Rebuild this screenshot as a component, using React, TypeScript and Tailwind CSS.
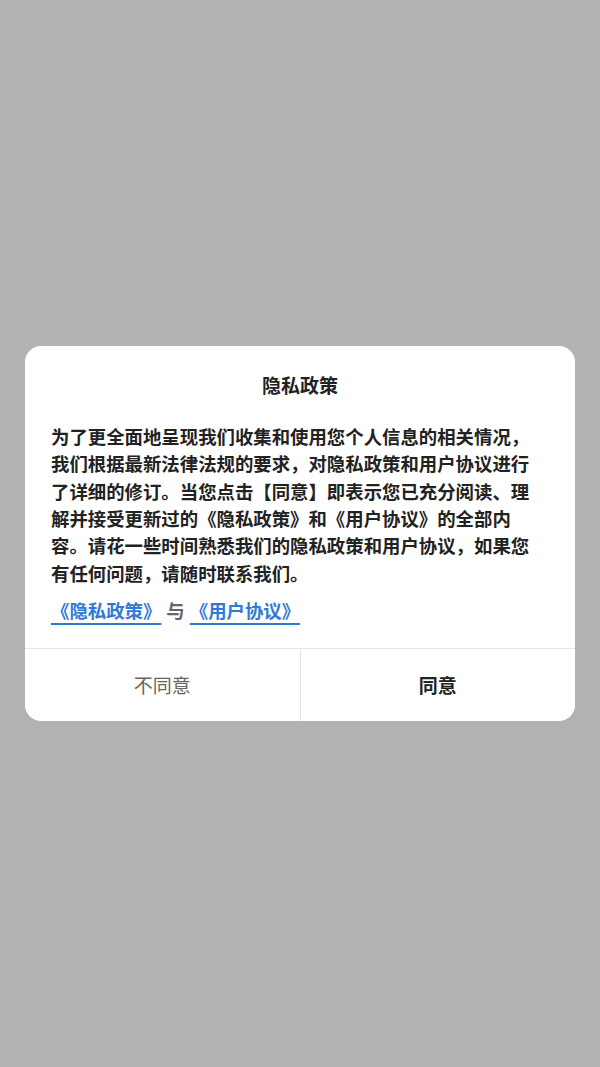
import React from "react";

export default function App() {
  return (
    <div
      className="w-[600px] h-[1067px] bg-[#b2b2b2] flex items-center justify-center"
      style={{ fontFamily: '"Noto Sans CJK SC", "Noto Sans", sans-serif' }}
    >
      <div className="w-[550px] bg-white rounded-[16px] overflow-hidden flex flex-col">
        <div className="pt-[25px] px-[26px] pb-[24px] flex flex-col">
          <div className="text-center text-[19px] leading-[27px] font-semibold text-[#222]">隐私政策</div>
          <p className="mt-[25px] w-[490px] text-[18.4px] leading-[27.3px] font-bold text-[#222]">
            为了更全面地呈现我们收集和使用您个人信息的相关情况，我们根据最新法律法规的要求，对隐私政策和用户协议进行了详细的修订。当您点击【同意】即表示您已充分阅读、理解并接受更新过的《隐私政策》和《用户协议》的全部内容。请花一些时间熟悉我们的隐私政策和用户协议，如果您有任何问题，请随时联系我们。
          </p>
          <div className="mt-[10px] text-[18.4px] leading-[27px] font-bold flex items-center">
            <span className="text-[#2f7ad6] underline underline-offset-[5px] decoration-[1.5px]">《隐私政策》</span>
            <span className="text-[#666] mx-[5px]">与</span>
            <span className="text-[#2f7ad6] underline underline-offset-[5px] decoration-[1.5px]">《用户协议》</span>
          </div>
        </div>
        <div className="flex border-t border-[#e6e6e6] h-[73px]">
          <div className="flex-1 flex items-center justify-center text-[19px] text-[#666] border-r border-[#e6e6e6]">不同意</div>
          <div className="flex-1 flex items-center justify-center text-[19px] font-bold text-[#222]">同意</div>
        </div>
      </div>
    </div>
  );
}
